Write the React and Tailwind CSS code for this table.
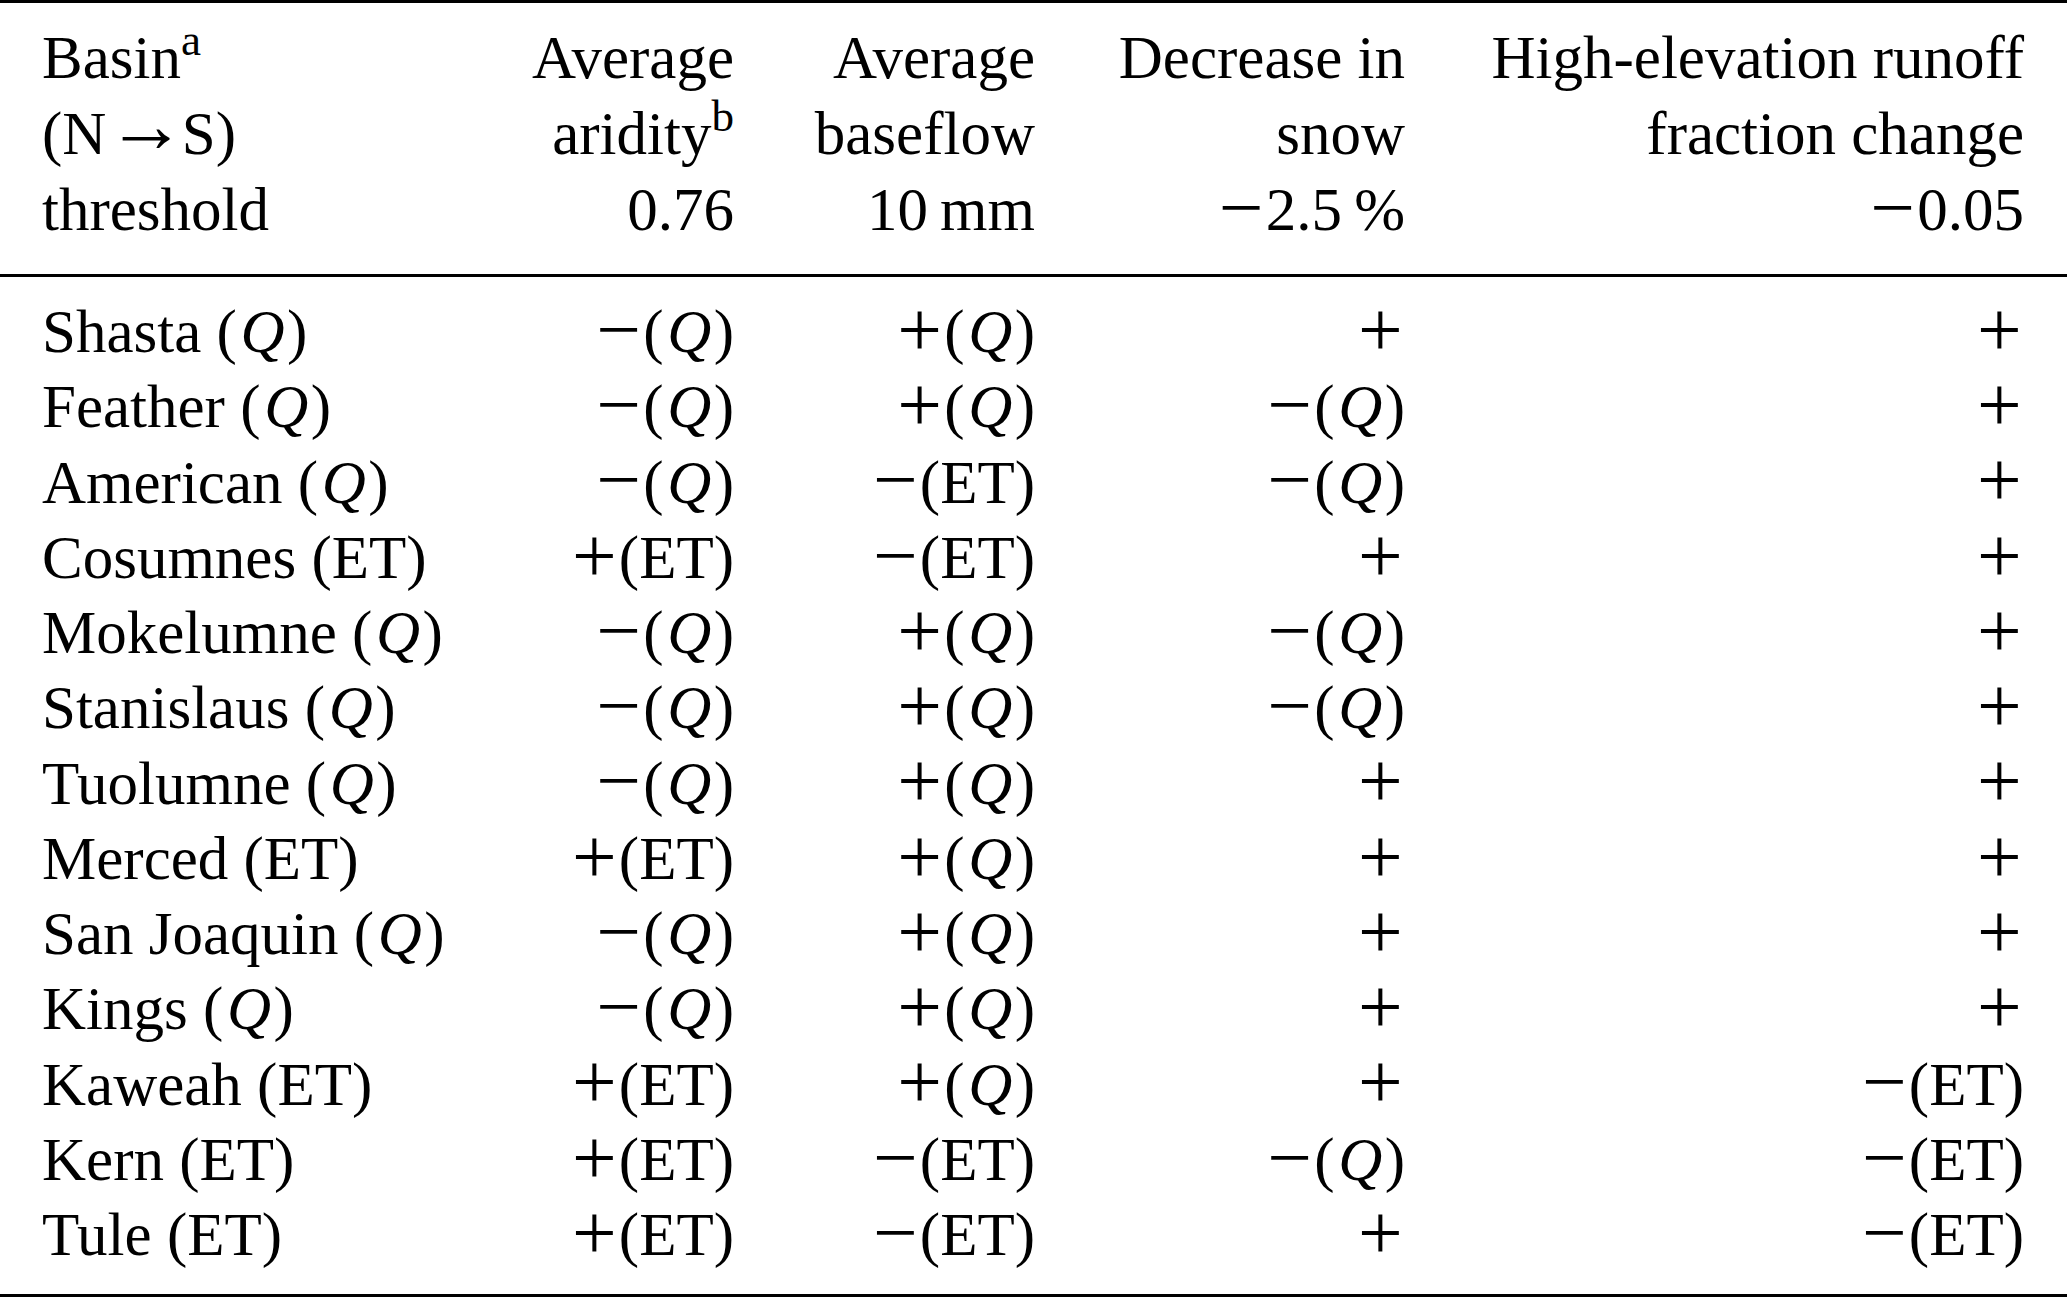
const rows = [
  ['Shasta', 'Q', 'mQ', 'pQ', 'p', 'p'],
  ['Feather', 'Q', 'mQ', 'pQ', 'mQ', 'p'],
  ['American', 'Q', 'mQ', 'mET', 'mQ', 'p'],
  ['Cosumnes', 'ET', 'pET', 'mET', 'p', 'p'],
  ['Mokelumne', 'Q', 'mQ', 'pQ', 'mQ', 'p'],
  ['Stanislaus', 'Q', 'mQ', 'pQ', 'mQ', 'p'],
  ['Tuolumne', 'Q', 'mQ', 'pQ', 'p', 'p'],
  ['Merced', 'ET', 'pET', 'pQ', 'p', 'p'],
  ['San Joaquin', 'Q', 'mQ', 'pQ', 'p', 'p'],
  ['Kings', 'Q', 'mQ', 'pQ', 'p', 'p'],
  ['Kaweah', 'ET', 'pET', 'pQ', 'p', 'mET'],
  ['Kern', 'ET', 'pET', 'mET', 'mQ', 'mET'],
  ['Tule', 'ET', 'pET', 'mET', 'p', 'mET'],
];

// math-style plus / minus, wider than the text glyphs
const Sign = ({ s }) => (
  <span className="w-[0.62em] text-center text-[1.3em] leading-[0.85] -translate-y-[0.02em]">{s}</span>
);

const Tag = ({ t }) =>
  t === 'Q' ? (
    <span>
      (<span className="italic pl-[0.06em] pr-[0.04em]">Q</span>)
    </span>
  ) : (
    <span>(ET)</span>
  );

const Cell = ({ code }) => {
  const rest = code.slice(1);
  return (
    <div className="flex justify-end items-center h-full">
      <Sign s={code[0] === 'm' ? '\u2212' : '+'} />
      {rest && <Tag t={rest} />}
    </div>
  );
};

const grid = 'grid grid-cols-[418px_274px_301px_370px_619px] pl-[42px]';

export default function App() {
  return (
    <div
      className="w-[2067px] h-[1299px] bg-white text-black text-[61px]"
      style={{ fontFamily: '"Liberation Serif", "Times New Roman", serif' }}
    >
      <div className="border-t-[3px] border-black" />
      <div className={`${grid} pt-[17px] pb-[26px] leading-[76px]`}>
        <div>
          <div>
            Basin<sup className="text-[0.74em] -top-[0.5em]">a</sup>
          </div>
          <div className="flex items-center h-[76px]">
            <span>(N</span>
            <span className="w-[0.95em] text-center text-[1.3em] leading-[0.85] -translate-y-[0.1em]">
              {'\u2192'}
            </span>
            <span>S)</span>
          </div>
          <div>threshold</div>
        </div>
        <div className="text-right">
          <div>Average</div>
          <div>
            aridity<sup className="text-[0.74em] -top-[0.5em]">b</sup>
          </div>
          <div>0.76</div>
        </div>
        <div className="text-right">
          <div>Average</div>
          <div>baseflow</div>
          <div>10{'\u2009'}mm</div>
        </div>
        <div className="text-right">
          <div>Decrease in</div>
          <div>snow</div>
          <div className="flex justify-end items-center h-[76px]">
            <Sign s={'\u2212'} />
            <span>2.5{'\u2009'}%</span>
          </div>
        </div>
        <div className="text-right">
          <div>High-elevation runoff</div>
          <div>fraction change</div>
          <div className="flex justify-end items-center h-[76px]">
            <Sign s={'\u2212'} />
            <span>0.05</span>
          </div>
        </div>
      </div>
      <div className="border-t-[3px] border-black" />
      <div className="pt-[17px] pb-[22px]">
        {rows.map((r) => (
          <div key={r[0]} className={`${grid} h-[75.25px] leading-[75.25px]`}>
            <div>
              {r[0]} <Tag t={r[1]} />
            </div>
            <Cell code={r[2]} />
            <Cell code={r[3]} />
            <Cell code={r[4]} />
            <Cell code={r[5]} />
          </div>
        ))}
      </div>
      <div className="border-t-[3px] border-black" />
    </div>
  );
}
